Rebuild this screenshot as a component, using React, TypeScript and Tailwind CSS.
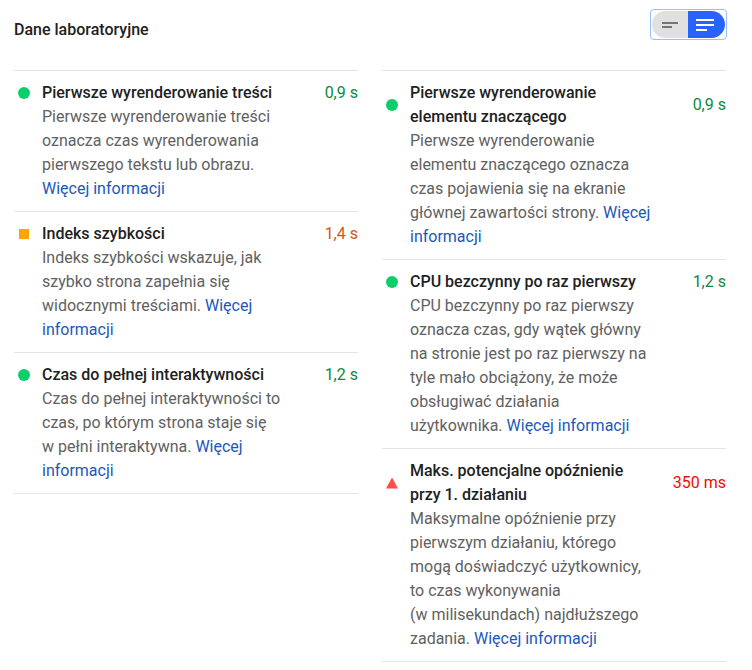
type Status = "pass" | "average" | "fail";

type Metric = {
  title: string;
  value: string;
  status: Status;
  desc: string;
};

const left: Metric[] = [
  {
    title: "Pierwsze wyrenderowanie treści",
    value: "0,9 s",
    status: "pass",
    desc: "Pierwsze wyrenderowanie treści oznacza czas wyrenderowania pierwszego tekstu lub obrazu.",
  },
  {
    title: "Indeks szybkości",
    value: "1,4 s",
    status: "average",
    desc: "Indeks szybkości wskazuje, jak szybko strona zapełnia się widocznymi treściami.",
  },
  {
    title: "Czas do pełnej interaktywności",
    value: "1,2 s",
    status: "pass",
    desc: "Czas do pełnej interaktywności to czas, po którym strona staje się w\u00a0pełni interaktywna.",
  },
];

const right: Metric[] = [
  {
    title: "Pierwsze wyrenderowanie elementu znaczącego",
    value: "0,9 s",
    status: "pass",
    desc: "Pierwsze wyrenderowanie elementu znaczącego oznacza czas pojawienia się na ekranie głównej zawartości strony.",
  },
  {
    title: "CPU bezczynny po raz pierwszy",
    value: "1,2 s",
    status: "pass",
    desc: "CPU bezczynny po raz pierwszy oznacza czas, gdy wątek główny na stronie jest po raz pierwszy na tyle mało obciążony, że może obsługiwać działania użytkownika.",
  },
  {
    title: "Maks. potencjalne opóźnienie przy 1. działaniu",
    value: "350 ms",
    status: "fail",
    desc: "Maksymalne opóźnienie przy pierwszym działaniu, którego mogą doświadczyć użytkownicy, to czas wykonywania (w\u00a0milisekundach) najdłuższego zadania.",
  },
];

function StatusIcon({ status }: { status: Status }) {
  if (status === "pass") {
    return <span className="ml-[4px] block h-[12px] w-[12px] rounded-full bg-[#0cce6b]" />;
  }
  if (status === "average") {
    return <span className="ml-[5px] block h-[10px] w-[10px] bg-[#ffa400]" />;
  }
  return (
    <svg className="ml-[4px] block" width="12" height="12" viewBox="0 0 12 12">
      <polygon points="6,0.5 12,11.5 0,11.5" fill="#ff4e42" />
    </svg>
  );
}

const valueColor: Record<Status, string> = {
  pass: "text-[#0b8a43]",
  average: "text-[#d4550f]",
  fail: "text-[#eb0f00]",
};

function MetricRow({ m }: { m: Metric }) {
  return (
    <div className="grid grid-cols-[28px_10fr_3fr] border-t border-[#e4e4e4] py-[10px]">
      <div className="flex items-center">
        <StatusIcon status={m.status} />
      </div>
      <div className="font-medium text-[#212121]">{m.title}</div>
      <div className={`self-center text-right ${valueColor[m.status]}`}>{m.value}</div>
      <div className="col-start-2 text-[#616161]">
        {m.desc} <a className="text-[#1c58b8]">Więcej informacji</a>
      </div>
    </div>
  );
}

function ViewToggle() {
  return (
    <div className="mt-[10px] rounded-[3px] p-[1px] outline outline-[1.5px] outline-[#9bbcff]">
      <div className="flex h-[27px] w-[73px] overflow-hidden rounded-full">
        <div className="flex w-[36px] items-center justify-center bg-[#e0e0e0]">
          <svg width="16" height="8" viewBox="0 0 16 8">
            <rect x="0" y="1" width="16" height="2" fill="#757575" />
            <rect x="0" y="5" width="10" height="2" fill="#757575" />
          </svg>
        </div>
        <div className="flex flex-1 items-center justify-center bg-[#2962ff] pr-[3px]">
          <svg width="18" height="12" viewBox="0 0 18 12">
            <rect x="0" y="0" width="18" height="2" fill="#fff" />
            <rect x="0" y="5" width="18" height="2" fill="#fff" />
            <rect x="0" y="10" width="11" height="2" fill="#fff" />
          </svg>
        </div>
      </div>
    </div>
  );
}

export default function App() {
  return (
    <div className="min-h-[670px] bg-white font-['Roboto',sans-serif] text-[16px] leading-[24px]">
      <div className="ml-[14px] w-[712px]">
        <div className="flex h-[70px] items-start justify-between">
          <h2 className="mt-[18px] font-medium text-[#212121]">Dane laboratoryjne</h2>
          <ViewToggle />
        </div>
        <div className="grid grid-cols-2 gap-x-[24px] items-start">
          <div className="border-b border-[#e4e4e4]">
            {left.map((m) => (
              <MetricRow key={m.title} m={m} />
            ))}
          </div>
          <div className="border-b border-[#e4e4e4]">
            {right.map((m) => (
              <MetricRow key={m.title} m={m} />
            ))}
          </div>
        </div>
      </div>
    </div>
  );
}
